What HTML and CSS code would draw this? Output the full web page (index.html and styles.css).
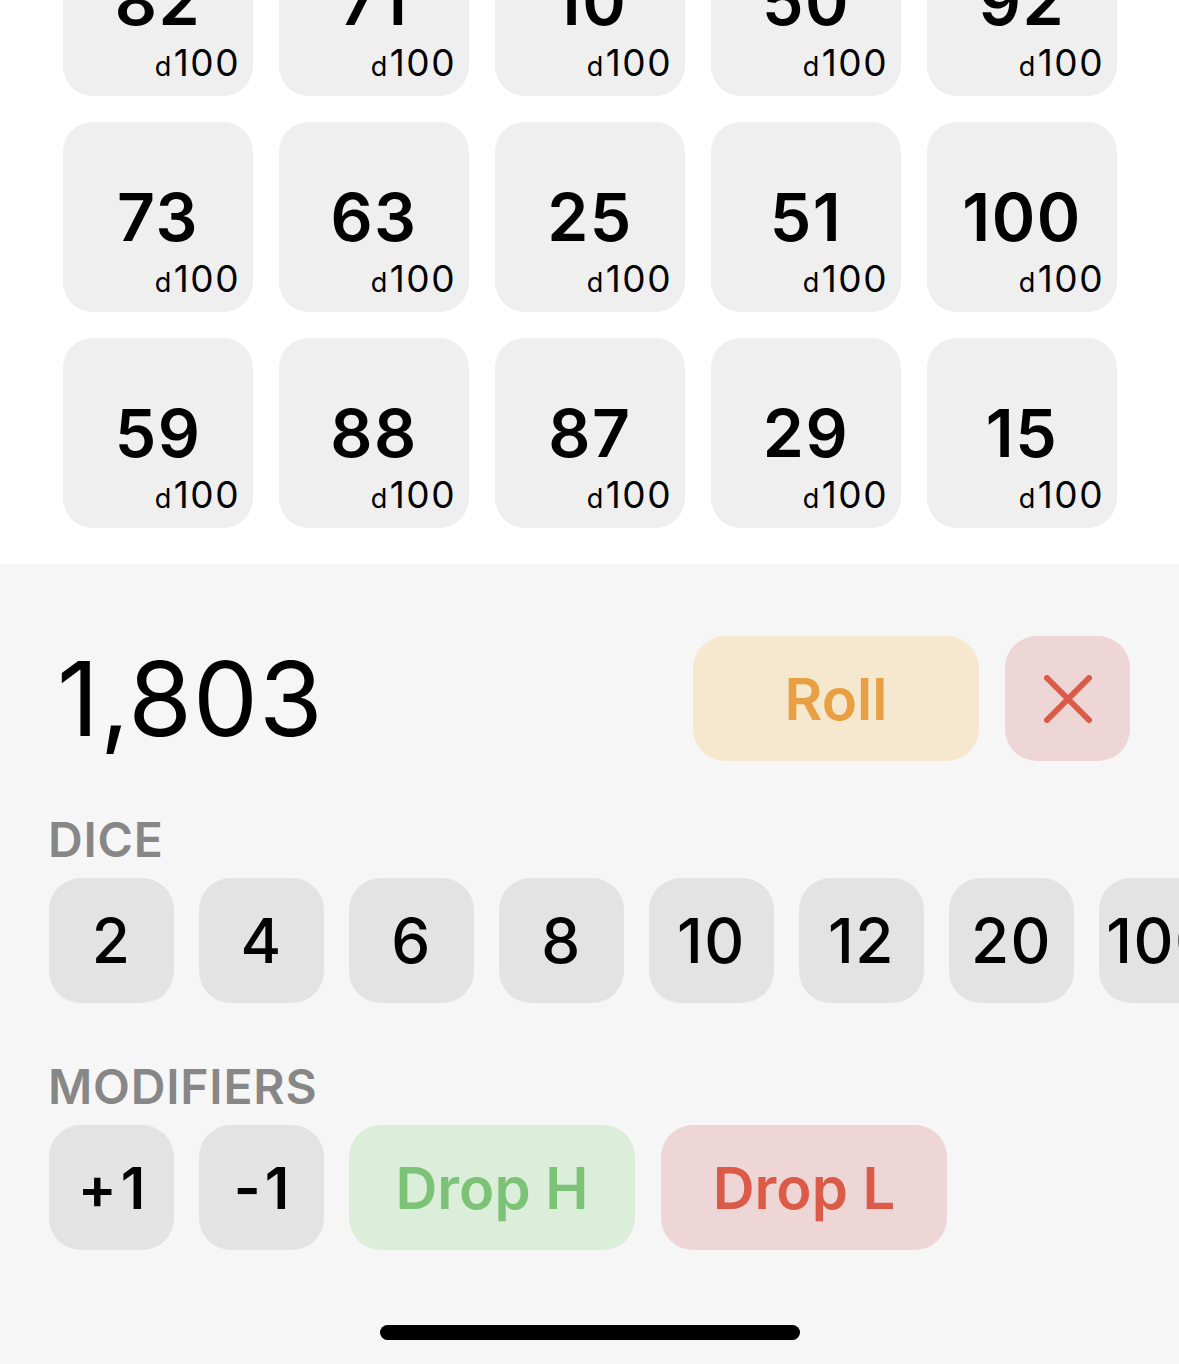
FILE: index.html
```html
<!DOCTYPE html>
<html>
<head>
<meta charset="utf-8">
<link rel="stylesheet" href="styles.css">
</head>
<body>
<div class="screen">
  <section class="results">
    <div class="grid">
      <div class="card"><div class="val">82</div><div class="die"><span class="d">d</span>100</div></div>
      <div class="card"><div class="val">71</div><div class="die"><span class="d">d</span>100</div></div>
      <div class="card"><div class="val">10</div><div class="die"><span class="d">d</span>100</div></div>
      <div class="card"><div class="val">50</div><div class="die"><span class="d">d</span>100</div></div>
      <div class="card"><div class="val">92</div><div class="die"><span class="d">d</span>100</div></div>
      <div class="card"><div class="val">73</div><div class="die"><span class="d">d</span>100</div></div>
      <div class="card"><div class="val">63</div><div class="die"><span class="d">d</span>100</div></div>
      <div class="card"><div class="val">25</div><div class="die"><span class="d">d</span>100</div></div>
      <div class="card"><div class="val">51</div><div class="die"><span class="d">d</span>100</div></div>
      <div class="card"><div class="val">100</div><div class="die"><span class="d">d</span>100</div></div>
      <div class="card"><div class="val">59</div><div class="die"><span class="d">d</span>100</div></div>
      <div class="card"><div class="val">88</div><div class="die"><span class="d">d</span>100</div></div>
      <div class="card"><div class="val">87</div><div class="die"><span class="d">d</span>100</div></div>
      <div class="card"><div class="val">29</div><div class="die"><span class="d">d</span>100</div></div>
      <div class="card"><div class="val">15</div><div class="die"><span class="d">d</span>100</div></div>
    </div>
  </section>
  <section class="panel">
    <div class="total-row">
      <div class="total">1,803</div>
      <div class="actions">
        <button class="btn roll">Roll</button>
        <button class="btn clear" aria-label="Clear">
          <svg width="48" height="48" viewBox="0 0 48 48"><path d="M3 3 L45 45 M45 3 L3 45" stroke="#dc5a48" stroke-width="6" stroke-linecap="round" fill="none"/></svg>
        </button>
      </div>
    </div>
    <div class="label">DICE</div>
    <div class="row dice">
      <button class="btn sq">2</button>
      <button class="btn sq">4</button>
      <button class="btn sq">6</button>
      <button class="btn sq">8</button>
      <button class="btn sq">10</button>
      <button class="btn sq">12</button>
      <button class="btn sq">20</button>
      <button class="btn sq">100</button>
    </div>
    <div class="label mods">MODIFIERS</div>
    <div class="row">
      <button class="btn sq mod">+1</button>
      <button class="btn sq mod">-1</button>
      <button class="btn wide droph">Drop H</button>
      <button class="btn wide dropl">Drop L</button>
    </div>
    <div class="home"></div>
  </section>
</div>
</body>
</html>
```

FILE: styles.css
```css
* { box-sizing: border-box; }
html, body { margin: 0; padding: 0; }
body {
  width: 1179px;
  height: 1364px;
  overflow: hidden;
  font-family: Inter, "Liberation Sans", sans-serif;
  color: #000;
  background: #f6f6f6;
}
.screen { width: 1179px; height: 1364px; display: flex; flex-direction: column; }

.results {
  height: 564px;
  background: #fff;
  overflow: hidden;
  flex-shrink: 0;
}
.grid {
  display: grid;
  grid-template-columns: repeat(5, 190px);
  gap: 26px;
  margin-top: -94px;
  padding-left: 63px;
}
.card {
  height: 190px;
  background: #efefef;
  border-radius: 30px;
  display: flex;
  flex-direction: column;
  padding: 62px 13px 15px 13px;
}
.val {
  font-size: 66px;
  line-height: 66px;
  font-weight: 600;
  text-align: center;
  letter-spacing: 1.5px;
}
.die {
  margin-top: 11px;
  font-size: 37px;
  line-height: 36px;
  text-align: right;
  font-weight: 400;
  letter-spacing: 1.5px;
}
.die .d { font-size: 27px; margin-right: 1px; }

.panel {
  flex: 1;
  background: #f6f6f6;
  padding: 72px 49px 0 49px;
  display: flex;
  flex-direction: column;
  overflow: hidden;
}
.total-row {
  display: flex;
  align-items: center;
  justify-content: space-between;
  height: 125px;
}
.total {
  font-size: 103px;
  font-weight: 400;
  line-height: 1;
  padding-left: 8px;
  letter-spacing: 1px;
}
.actions { display: flex; gap: 26px; }
.btn {
  border: 0;
  margin: 0;
  padding: 0;
  font-family: inherit;
  display: flex;
  align-items: center;
  justify-content: center;
  flex-shrink: 0;
  height: 125px;
  border-radius: 32px;
}
.roll {
  width: 286px;
  background: #f6e8cf;
  color: #e9a042;
  font-size: 58px;
  font-weight: 600;
}
.clear { width: 125px; background: #efd6d6; }

.label {
  margin-top: 51px;
  margin-bottom: 10px;
  margin-left: -1px;
  font-size: 48px;
  line-height: 56px;
  font-weight: 600;
  color: #878787;
  letter-spacing: 0.8px;
}
.label.mods { margin-top: 56px; }
.row {
  display: flex;
  gap: 25px;
  margin-right: -49px;
  overflow: hidden;
}
.sq {
  width: 125px;
  background: #e3e3e3;
  color: #000;
  font-size: 62px;
  font-weight: 500;
  letter-spacing: 1.5px;
}
.mod { font-size: 58px; font-weight: 600; letter-spacing: 4px; padding-left: 4px; }
.wide {
  width: 286px;
  font-size: 58px;
  font-weight: 600;
}
.droph { background: #dbeeda; color: #7cc377; }
.dropl { background: #efd6d6; color: #dc5a48; margin-left: 1px; }

.home {
  width: 420px;
  height: 15px;
  border-radius: 8px;
  background: #000;
  margin: 75px auto 0 auto;
}
```
